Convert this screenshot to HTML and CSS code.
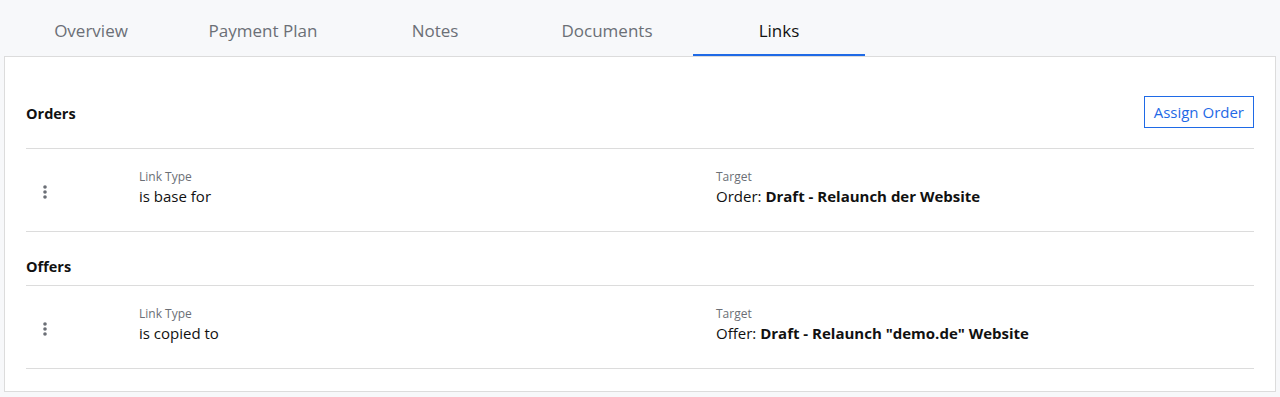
FILE: index.html
```html
<!DOCTYPE html>
<html lang="en">
<head>
    <meta charset="UTF-8">
    <meta name="viewport" content="width=device-width, initial-scale=1.0">
    <title>Links</title>
    <link rel="stylesheet" href="styles.css">
</head>
<body>

<div class="page">
    <div class="tabs">
        <div class="tab">Overview</div>
        <div class="tab">Payment Plan</div>
        <div class="tab">Notes</div>
        <div class="tab">Documents</div>
        <div class="tab active">Links</div>
    </div>

    <div class="panel">
        <div class="section-head first">
            <h3>Orders</h3>
            <button class="btn-outline">Assign Order</button>
        </div>
        <div class="link-row">
            <div class="menu">
                <svg width="6" height="16" viewBox="0 0 6 16"><circle cx="3" cy="3" r="1.8"/><circle cx="3" cy="8" r="1.8"/><circle cx="3" cy="13" r="1.8"/></svg>
            </div>
            <div class="field">
                <div class="label">Link Type</div>
                <div class="value">is base for</div>
            </div>
            <div class="field">
                <div class="label">Target</div>
                <div class="value">Order: <b>Draft - Relaunch der Website</b></div>
            </div>
        </div>

        <div class="section-head">
            <h3>Offers</h3>
        </div>
        <div class="link-row">
            <div class="menu">
                <svg width="6" height="16" viewBox="0 0 6 16"><circle cx="3" cy="3" r="1.8"/><circle cx="3" cy="8" r="1.8"/><circle cx="3" cy="13" r="1.8"/></svg>
            </div>
            <div class="field">
                <div class="label">Link Type</div>
                <div class="value">is copied to</div>
            </div>
            <div class="field">
                <div class="label">Target</div>
                <div class="value">Offer: <b>Draft - Relaunch "demo.de" Website</b></div>
            </div>
        </div>
    </div>
</div>

</body>
</html>
```

FILE: styles.css
```css
body {
    margin: 0;
    background-color: #f7f8fa;
    font-family: 'Open Sans', sans-serif;
    color: #111;
}

.page {
    margin: 0 4px;
}

.tabs {
    display: flex;
    padding-left: 1px;
    height: 56px;
}

.tab {
    width: 172px;
    text-align: center;
    font-size: 17px;
    line-height: 22px;
    padding-top: 20px;
    color: #6b6f76;
    box-sizing: border-box;
    border-bottom: 2px solid transparent;
}

.tab.active {
    color: #111;
    border-bottom-color: #1f6ae6;
}

.panel {
    background-color: #fff;
    border: 1px solid #dcdcdc;
    padding: 0 21px 22px 21px;
}

.section-head {
    display: flex;
    align-items: center;
    justify-content: space-between;
    border-bottom: 1px solid #dcdcdc;
    padding: 25px 0 8px 0;
}

.section-head.first {
    padding: 39px 0 20px 0;
}

.section-head h3 {
    margin: 0;
    font-size: 14.5px;
    line-height: 20px;
    font-weight: 700;
}

.section-head.first h3 {
    padding-top: 3px;
}

.btn-outline {
    font-family: 'Open Sans', sans-serif;
    font-size: 15px;
    line-height: 20px;
    color: #1f6ae6;
    background: #fff;
    border: 1px solid #1f6ae6;
    padding: 5px 9px;
    border-radius: 0;
}

.link-row {
    display: grid;
    grid-template-columns: 113px 577px 1fr;
    align-items: center;
    border-bottom: 1px solid #dcdcdc;
    padding: 19px 0 24px 0;
}

.menu {
    padding-left: 16px;
    padding-top: 8px;
    fill: #6b6f76;
}

.menu svg {
    display: block;
}

.label {
    font-size: 12px;
    line-height: 17px;
    color: #6b6f76;
}

.value {
    font-size: 15px;
    line-height: 22px;
}

.value b {
    font-weight: 700;
}
```
